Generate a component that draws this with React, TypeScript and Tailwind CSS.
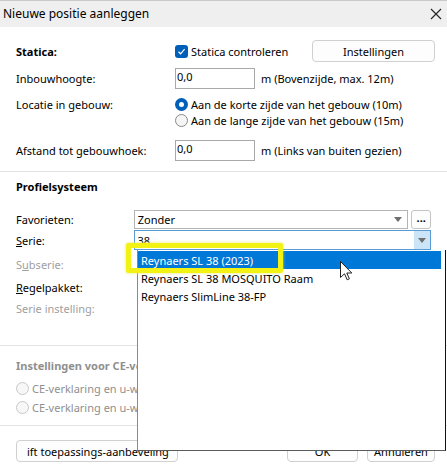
import React from "react";

const Radio = ({ checked, disabled }: { checked?: boolean; disabled?: boolean }) =>
  checked ? (
    <span className="w-[13px] h-[13px] rounded-full bg-[#005fb8] flex items-center justify-center shrink-0">
      <span className="w-[5px] h-[5px] rounded-full bg-white" />
    </span>
  ) : (
    <span
      className={
        disabled
          ? "w-[13px] h-[13px] rounded-full border border-[#c8c8c8] bg-[#f7f7f7] shrink-0"
          : "w-[13px] h-[13px] rounded-full border border-[#8a8a8a] bg-[#f5f5f5] shrink-0"
      }
    />
  );

const Arrow = () => (
  <svg width="8" height="5" viewBox="0 0 8 5">
    <path d="M0 0 L8 0 L4 5 Z" fill="#6f6f6f" />
  </svg>
);

export default function App() {
  return (
    <div className="relative w-[447px] h-[465px] overflow-hidden bg-white text-[11px] leading-none text-black whitespace-nowrap font-['Noto_Sans',sans-serif]">
      {/* title bar */}
      <div className="h-[27px] bg-[#efefef] border-t border-[#c9c9c9] flex items-center justify-between pl-[3px] pr-[5px]">
        <span className="text-[12px]">Nieuwe positie aanleggen</span>
        <svg width="12" height="12" viewBox="0 0 12 12">
          <path d="M1 1 L11 11 M11 1 L1 11" stroke="#222" strokeWidth="1.1" />
        </svg>
      </div>

      {/* Statica section */}
      <div className="px-[16px]">
        <div className="mt-[13px] h-[22px] flex items-center">
          <span className="w-[159px] font-bold">Statica:</span>
          <span className="w-[13px] h-[13px] rounded-[3px] bg-[#005fb8] flex items-center justify-center">
            <svg width="9" height="9" viewBox="0 0 9 9">
              <path d="M1.5 4.8 L3.6 6.8 L7.6 2.2" stroke="white" strokeWidth="1.2" fill="none" />
            </svg>
          </span>
          <span className="ml-[3px]">Statica controleren</span>
          <button className="ml-auto mr-[-4px] w-[123px] h-[22px] rounded-[4px] border border-[#d0d0d0] bg-[#fdfdfd] text-[11px]">
            Instellingen
          </button>
        </div>

        <div className="mt-[6px] h-[21px] flex items-center">
          <span className="w-[159px]">Inbouwhoogte:</span>
          <div className="w-[80px] h-[21px] border border-[#a8a8a8] pl-[1px] pt-[2px]">0,0</div>
          <span className="ml-[6px]">m (Bovenzijde, max. 12m)</span>
        </div>

        <div className="mt-[7px] h-[16px] flex items-center">
          <span className="w-[159px]">Locatie in gebouw:</span>
          <Radio checked />
          <span className="ml-[3px]">Aan de korte zijde van het gebouw (10m)</span>
        </div>
        <div className="h-[16px] flex items-center">
          <span className="w-[159px]" />
          <Radio />
          <span className="ml-[3px]">Aan de lange zijde van het gebouw (15m)</span>
        </div>

        <div className="mt-[12px] h-[21px] flex items-center">
          <span className="w-[159px]">Afstand tot gebouwhoek:</span>
          <div className="w-[80px] h-[21px] border border-[#a8a8a8] pl-[1px] pt-[2px]">0,0</div>
          <span className="ml-[6px]">m (Links van buiten gezien)</span>
        </div>
      </div>

      <div className="mt-[10px] h-px bg-[#e3e3e3]" />

      {/* Profielsysteem */}
      <div className="px-[16px]">
        <div className="mt-[6px] h-[16px] flex items-center font-bold">Profielsysteem</div>

        <div className="mt-[16px] h-[19px] flex items-center">
          <span className="w-[121px]">Favorieten:</span>
          <div className="w-[282px] h-[19px] border border-[#b4b4b4] flex items-center justify-between pl-[3px] pr-[5px]">
            <span>Zonder</span>
            <Arrow />
          </div>
          <div className="ml-[3px] w-[20px] h-[19px] border border-[#c4c4c4] rounded-[3px] bg-[#fdfdfd] flex items-center justify-center font-bold text-[11px] pb-[4px]">
            ...
          </div>
        </div>

        <div className="mt-[1px] h-[20px] flex items-center">
          <span className="w-[121px]">
            <span className="underline">S</span>erie:
          </span>
          <div className="w-[306px] h-[20px] border border-[#5a9bd5] flex items-center">
            <span className="flex-1 pl-[3px]">38</span>
            <div className="w-[16px] h-full bg-[#cce4f7] flex items-center justify-center">
              <Arrow />
            </div>
          </div>
        </div>

        <div className="mt-[6px] h-[16px] flex items-center text-[#a0a0a0]">
          S<span className="underline">u</span>bserie:
        </div>
        <div className="mt-[7px] h-[16px] flex items-center">
          <span className="underline">R</span>egelpakket:
        </div>
        <div className="mt-[5px] h-[16px] flex items-center text-[#a0a0a0]">Serie instelling:</div>
      </div>

      <div className="mt-[29px] h-px bg-[#e3e3e3]" />

      {/* CE */}
      <div className="px-[16px] text-[#8f8f8f]">
        <div className="mt-[11px] h-[16px] flex items-center font-bold">Instellingen voor CE-verklaring</div>
        <div className="mt-[7px] h-[16px] flex items-center">
          <Radio disabled />
          <span className="ml-[3px]">CE-verklaring en u-waarde</span>
        </div>
        <div className="mt-[3px] h-[16px] flex items-center">
          <Radio disabled />
          <span className="ml-[3px]">CE-verklaring en u-waarde</span>
        </div>
      </div>

      <div className="mt-[10px] h-px bg-[#e3e3e3]" />

      <div className="px-[16px] mt-[14px] h-[22px] flex items-center">
        <button className="w-[162px] h-[22px] rounded-[4px] border border-[#d0d0d0] bg-[#fdfdfd] text-left pl-[10px] text-[11px] whitespace-nowrap overflow-hidden">
          ift toepassings-aanbeveling
        </button>
        <button className="ml-auto w-[71px] h-[22px] rounded-[4px] border border-[#d0d0d0] bg-[#fdfdfd] text-[11px]">
          OK
        </button>
        <button className="ml-[9px] mr-[-4px] w-[68px] h-[22px] rounded-[4px] border border-[#d0d0d0] bg-[#fdfdfd] text-[11px]">
          Annuleren
        </button>
      </div>

      {/* dropdown list overlay */}
      <div className="absolute left-[137px] top-[250px] w-[309px] h-[201px] bg-white border-l border-[#8a8a8a] border-b border-b-[#5a5a5a] border-r border-r-[#111] pt-[1px]">
        <div className="h-[18px] mr-[4px] bg-[#0078d7] text-white flex items-center pl-[3px]">Reynaers SL 38 (2023)</div>
        <div className="h-[18px] flex items-center pl-[3px]">Reynaers SL 38 MOSQUITO Raam</div>
        <div className="h-[18px] flex items-center pl-[3px]">Reynaers SlimLine 38-FP</div>
      </div>

      {/* yellow highlight */}
      <div className="absolute left-[126px] top-[243px] w-[157px] h-[30px] border-[5px] border-[#f2f215] rounded-[2px] shadow-[0_0_3px_#e8e860]" />

      {/* cursor */}
      <svg className="absolute left-[340px] top-[261px]" width="13" height="20" viewBox="0 0 13 20">
        <path d="M0.5 0.5 L0.5 16.5 L4.5 12.8 L7.2 18.8 L9.4 17.8 L6.8 12 L11.8 12 Z" fill="white" stroke="#222" strokeWidth="1" strokeLinejoin="round" />
      </svg>
    </div>
  );
}
